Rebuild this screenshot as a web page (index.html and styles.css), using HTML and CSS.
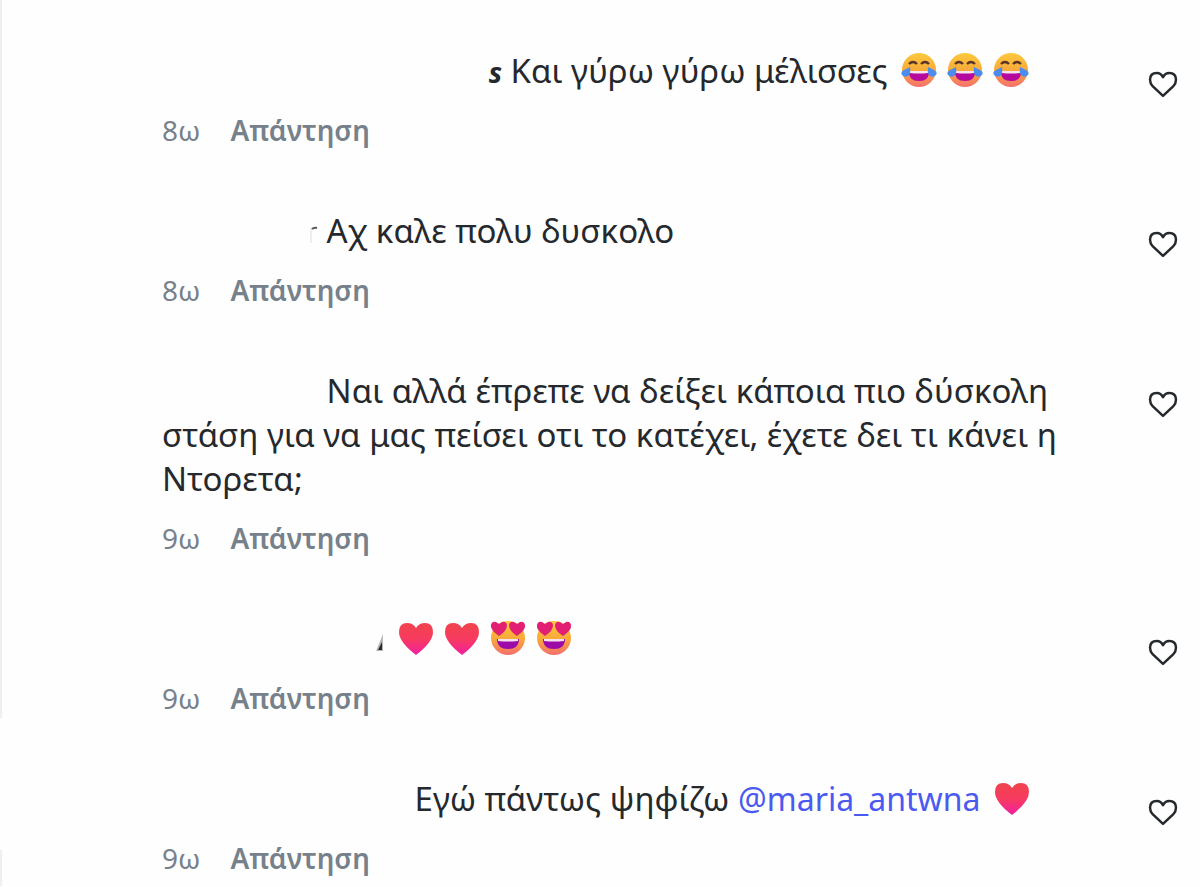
FILE: index.html
```html
<!DOCTYPE html>
<html lang="el">
<head>
  <meta charset="UTF-8">
  <title>Σχόλια</title>
  <link rel="stylesheet" href="styles.css">
</head>
<body>
  <!-- shared icons -->
  <svg class="defs" width="0" height="0" aria-hidden="true">
    <defs>
      <linearGradient id="face" x1="0" y1="0" x2="0" y2="1">
        <stop offset="0" stop-color="#fdc93c"/>
        <stop offset="0.55" stop-color="#f8a73a"/>
        <stop offset="1" stop-color="#f56f70"/>
      </linearGradient>
      <linearGradient id="red" x1="0" y1="0" x2="0" y2="1">
        <stop offset="0" stop-color="#f0444c"/>
        <stop offset="0.5" stop-color="#f83a60"/>
        <stop offset="1" stop-color="#f01fa0"/>
      </linearGradient>
      <symbol id="joy" viewBox="0 0 36 36">
        <circle cx="18" cy="18" r="17" fill="url(#face)"/>
        <path d="M8 12q4-4 8 0M20 12q4-4 8 0" fill="none" stroke="#5a3428" stroke-width="2.4"/>
        <path d="M8 19h20q.5 10-10 10T8 19z" fill="#b5089c"/>
        <path d="M9 19h18v2q-9 1-18 0z" fill="#f3e3ef"/>
        <path d="M9 15q1 7-2 9t-6-1q-2-3 2-5zM27 15q-1 7 2 9t6-1q2-3-2-5z" fill="#4a8cf0"/>
      </symbol>
      <symbol id="heart" viewBox="0 0 36 36">
        <path d="M18 35Q1 22 1 12 1 3 9 3q6 0 9 5 3-5 9-5 8 0 8 9 0 10-17 23z" fill="url(#red)"/>
      </symbol>
      <symbol id="eyes" viewBox="0 0 36 36">
        <circle cx="18" cy="18" r="17" fill="url(#face)"/>
        <path d="M9 16Q0 10 1 5q1-4 5-3l3 2 3-2q4-1 5 3 0 6-8 11zM27 16q-8-5-8-11 1-4 5-3l3 2 3-2q4-1 5 3 1 5-8 11z" fill="#e21f72"/>
        <path d="M7 19h22q0 10-11 10T7 19z" fill="#9c0aa8"/>
        <path d="M8 19h20v2q-10 1-20 0z" fill="#f3e3ef"/>
      </symbol>
      <symbol id="like" viewBox="0 0 28 26">
        <path d="M14 24L4 14.500Q1.500 12 1.500 8.500 1.500 2 8 2q4 0 6 4 2-4 6-4 6.500 0 6.500 6.500 0 3.500-2.500 6z" fill="none" stroke="#25292d" stroke-width="2.400" stroke-linejoin="round"/>
      </symbol>
    </defs>
  </svg>

  <main class="comments">
    <article class="comment">
      <div class="body">
        <p class="text"><span class="user user-1">s</span> Και γύρω γύρω μέλισσες <svg class="emoji"><use href="#joy"/></svg><svg class="emoji"><use href="#joy"/></svg><svg class="emoji"><use href="#joy"/></svg></p>
        <div class="meta"><span>8ω</span><button class="reply">Απάντηση</button></div>
      </div>
      <button class="like" aria-label="Μου αρέσει"><svg><use href="#like"/></svg></button>
    </article>

    <article class="comment">
      <div class="body">
        <p class="text"><span class="user user-2"><svg class="scrap" viewBox="0 0 8 24"><path d="M1 8v15" stroke="#dddddd" stroke-width="1"/><path d="M2 9q2-2 5-1" fill="none" stroke="#55595d" stroke-width="2"/></svg></span> Αχ καλε πολυ δυσκολο</p>
        <div class="meta"><span>8ω</span><button class="reply">Απάντηση</button></div>
      </div>
      <button class="like" aria-label="Μου αρέσει"><svg><use href="#like"/></svg></button>
    </article>

    <article class="comment">
      <div class="body">
        <p class="text"><span class="user user-3"></span> Ναι αλλά έπρεπε να δείξει κάποια πιο δύσκολη στάση για να μας πείσει οτι το κατέχει, έχετε δει τι κάνει η Ντορετα;</p>
        <div class="meta"><span>9ω</span><button class="reply">Απάντηση</button></div>
      </div>
      <button class="like" aria-label="Μου αρέσει"><svg><use href="#like"/></svg></button>
    </article>

    <article class="comment">
      <div class="body">
        <p class="text"><span class="user user-4"><svg class="scrap" viewBox="0 0 8 24"><path d="M0 23L7 6v17z" fill="#b5b7b9"/><path d="M2 22l4-8v8z" fill="#25292d"/></svg></span> <svg class="emoji"><use href="#heart"/></svg><svg class="emoji"><use href="#heart"/></svg><svg class="emoji"><use href="#eyes"/></svg><svg class="emoji"><use href="#eyes"/></svg></p>
        <div class="meta"><span>9ω</span><button class="reply">Απάντηση</button></div>
      </div>
      <button class="like" aria-label="Μου αρέσει"><svg><use href="#like"/></svg></button>
    </article>

    <article class="comment">
      <div class="body">
        <p class="text"><span class="user user-5"></span> Εγώ πάντως ψηφίζω <a href="#">@maria_antwna</a> <svg class="emoji"><use href="#heart"/></svg></p>
        <div class="meta"><span>9ω</span><button class="reply">Απάντηση</button></div>
      </div>
      <button class="like" aria-label="Μου αρέσει"><svg><use href="#like"/></svg></button>
    </article>
  </main>
</body>
</html>
```

FILE: styles.css
```css
body {
  margin: 0;
  background: #fefefe;
  color: #25292d;
  font-family: "Noto Sans", "Open Sans", sans-serif;
  font-size: 33px;
}
.defs {
  position: absolute;
}
.comments {
  display: flex;
  flex-direction: column;
  gap: 61px;
  padding: 49px 22px 10px 162px;
  background:
    linear-gradient(#efefef, #efefef) 0 0 / 2px 718px no-repeat,
    linear-gradient(#efefef, #efefef) 0 850px / 2px 100px no-repeat;
}
.comment {
  display: flex;
  align-items: flex-start;
  gap: 60px;
}
.body {
  flex: 1;
}
.text {
  margin: 0;
  line-height: 44px;
}
.text a {
  color: #4a5af0;
  font-size: 32px;
  line-height: 1;
  text-decoration: none;
}

/* hidden names keep their room at the start of the line */
.user {
  display: inline-block;
  text-align: right;
  font-size: 28px;
  font-weight: bold;
  font-style: italic;
  line-height: 24px;
}
.user-1 { width: 340px; }
.user-2 { width: 156px; }
.user-3 { width: 156px; }
.user-4 { width: 222px; }
.user-5 { width: 244px; }

.scrap {
  width: 8px;
  height: 24px;
  vertical-align: bottom;
}
.emoji {
  width: 36px;
  height: 36px;
  margin: 0 5px;
  vertical-align: -5px;
}
.meta {
  display: flex;
  gap: 30px;
  margin-top: 19px;
  color: #77818b;
  font-size: 28px;
  line-height: 36px;
}
.reply {
  padding: 0;
  border: none;
  background: none;
  color: inherit;
  font: inherit;
  font-weight: 600;
  cursor: pointer;
}
.like {
  margin-top: 22px;
  padding: 0;
  border: none;
  background: none;
  line-height: 0;
  cursor: pointer;
}
.like svg {
  width: 30px;
  height: 27px;
}
```
